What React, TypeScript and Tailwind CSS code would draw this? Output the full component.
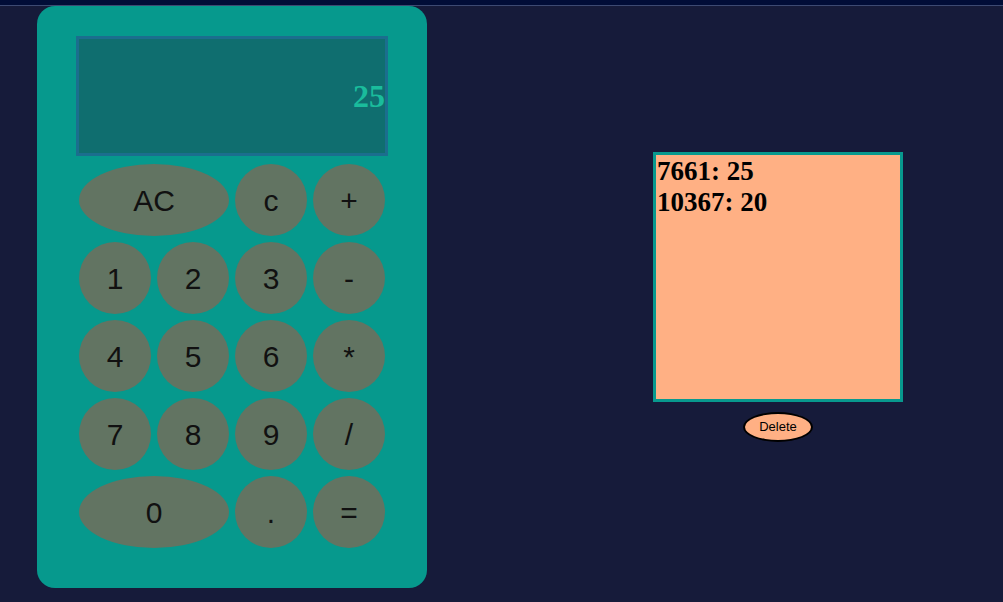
import { useState } from "react";

const keys: { label: string; wide?: boolean }[] = [
  { label: "AC", wide: true },
  { label: "c" },
  { label: "+" },
  { label: "1" },
  { label: "2" },
  { label: "3" },
  { label: "-" },
  { label: "4" },
  { label: "5" },
  { label: "6" },
  { label: "*" },
  { label: "7" },
  { label: "8" },
  { label: "9" },
  { label: "/" },
  { label: "0", wide: true },
  { label: "." },
  { label: "=" },
];

export default function App() {
  const [display] = useState("25");
  const [history] = useState([
    { id: 7661, value: 25 },
    { id: 10367, value: 20 },
  ]);

  return (
    <div className="min-h-[602px] w-full bg-[#161b3a]" style={{ fontFamily: '"Liberation Sans", Arial, sans-serif' }}>
      {/* top strip */}
      <div className="h-[6px] bg-[#010d37] border-b border-[#3d4a72]"></div>

      <div className="flex items-start">
        {/* calculator */}
        <div className="ml-[37px] w-[390px] h-[582px] bg-[#06998d] rounded-[18px] px-[39px] pt-[30px]">
          <div className="h-[120px] border-[3px] border-[#1b6e8e] bg-[#0f6e6f] flex items-center justify-end">
            <span
              className="text-[32px] font-bold text-[#1abc9c] leading-none"
              style={{ fontFamily: '"Liberation Serif", "Times New Roman", serif' }}
            >
              {display}
            </span>
          </div>

          <div className="mx-[3px] mt-[8px] grid grid-cols-[repeat(4,72px)] auto-rows-[72px] gap-[6px]">
            {keys.map((k) => (
              <button
                key={k.label}
                className={`${k.wide ? "col-span-2" : ""} rounded-[50%] bg-[#627462] text-[30px] text-[#111] flex items-center justify-center`}
              >
                {k.label}
              </button>
            ))}
          </div>
        </div>

        {/* history panel */}
        <div className="ml-[226px] mt-[146px] flex flex-col items-center">
          <div
            className="w-[250px] h-[250px] border-[3px] border-[#08998e] bg-[#ffb084] px-[1px] pt-[1px] text-[27px] font-bold text-black leading-[31px]"
            style={{ fontFamily: '"Liberation Serif", "Times New Roman", serif' }}
          >
            {history.map((h) => (
              <div key={h.id}>
                {h.id}: {h.value}
              </div>
            ))}
          </div>
          <button className="mt-[10px] w-[70px] h-[30px] rounded-[50%] border-2 border-black bg-[#ffb084] text-[13px] text-black">
            Delete
          </button>
        </div>
      </div>
    </div>
  );
}
